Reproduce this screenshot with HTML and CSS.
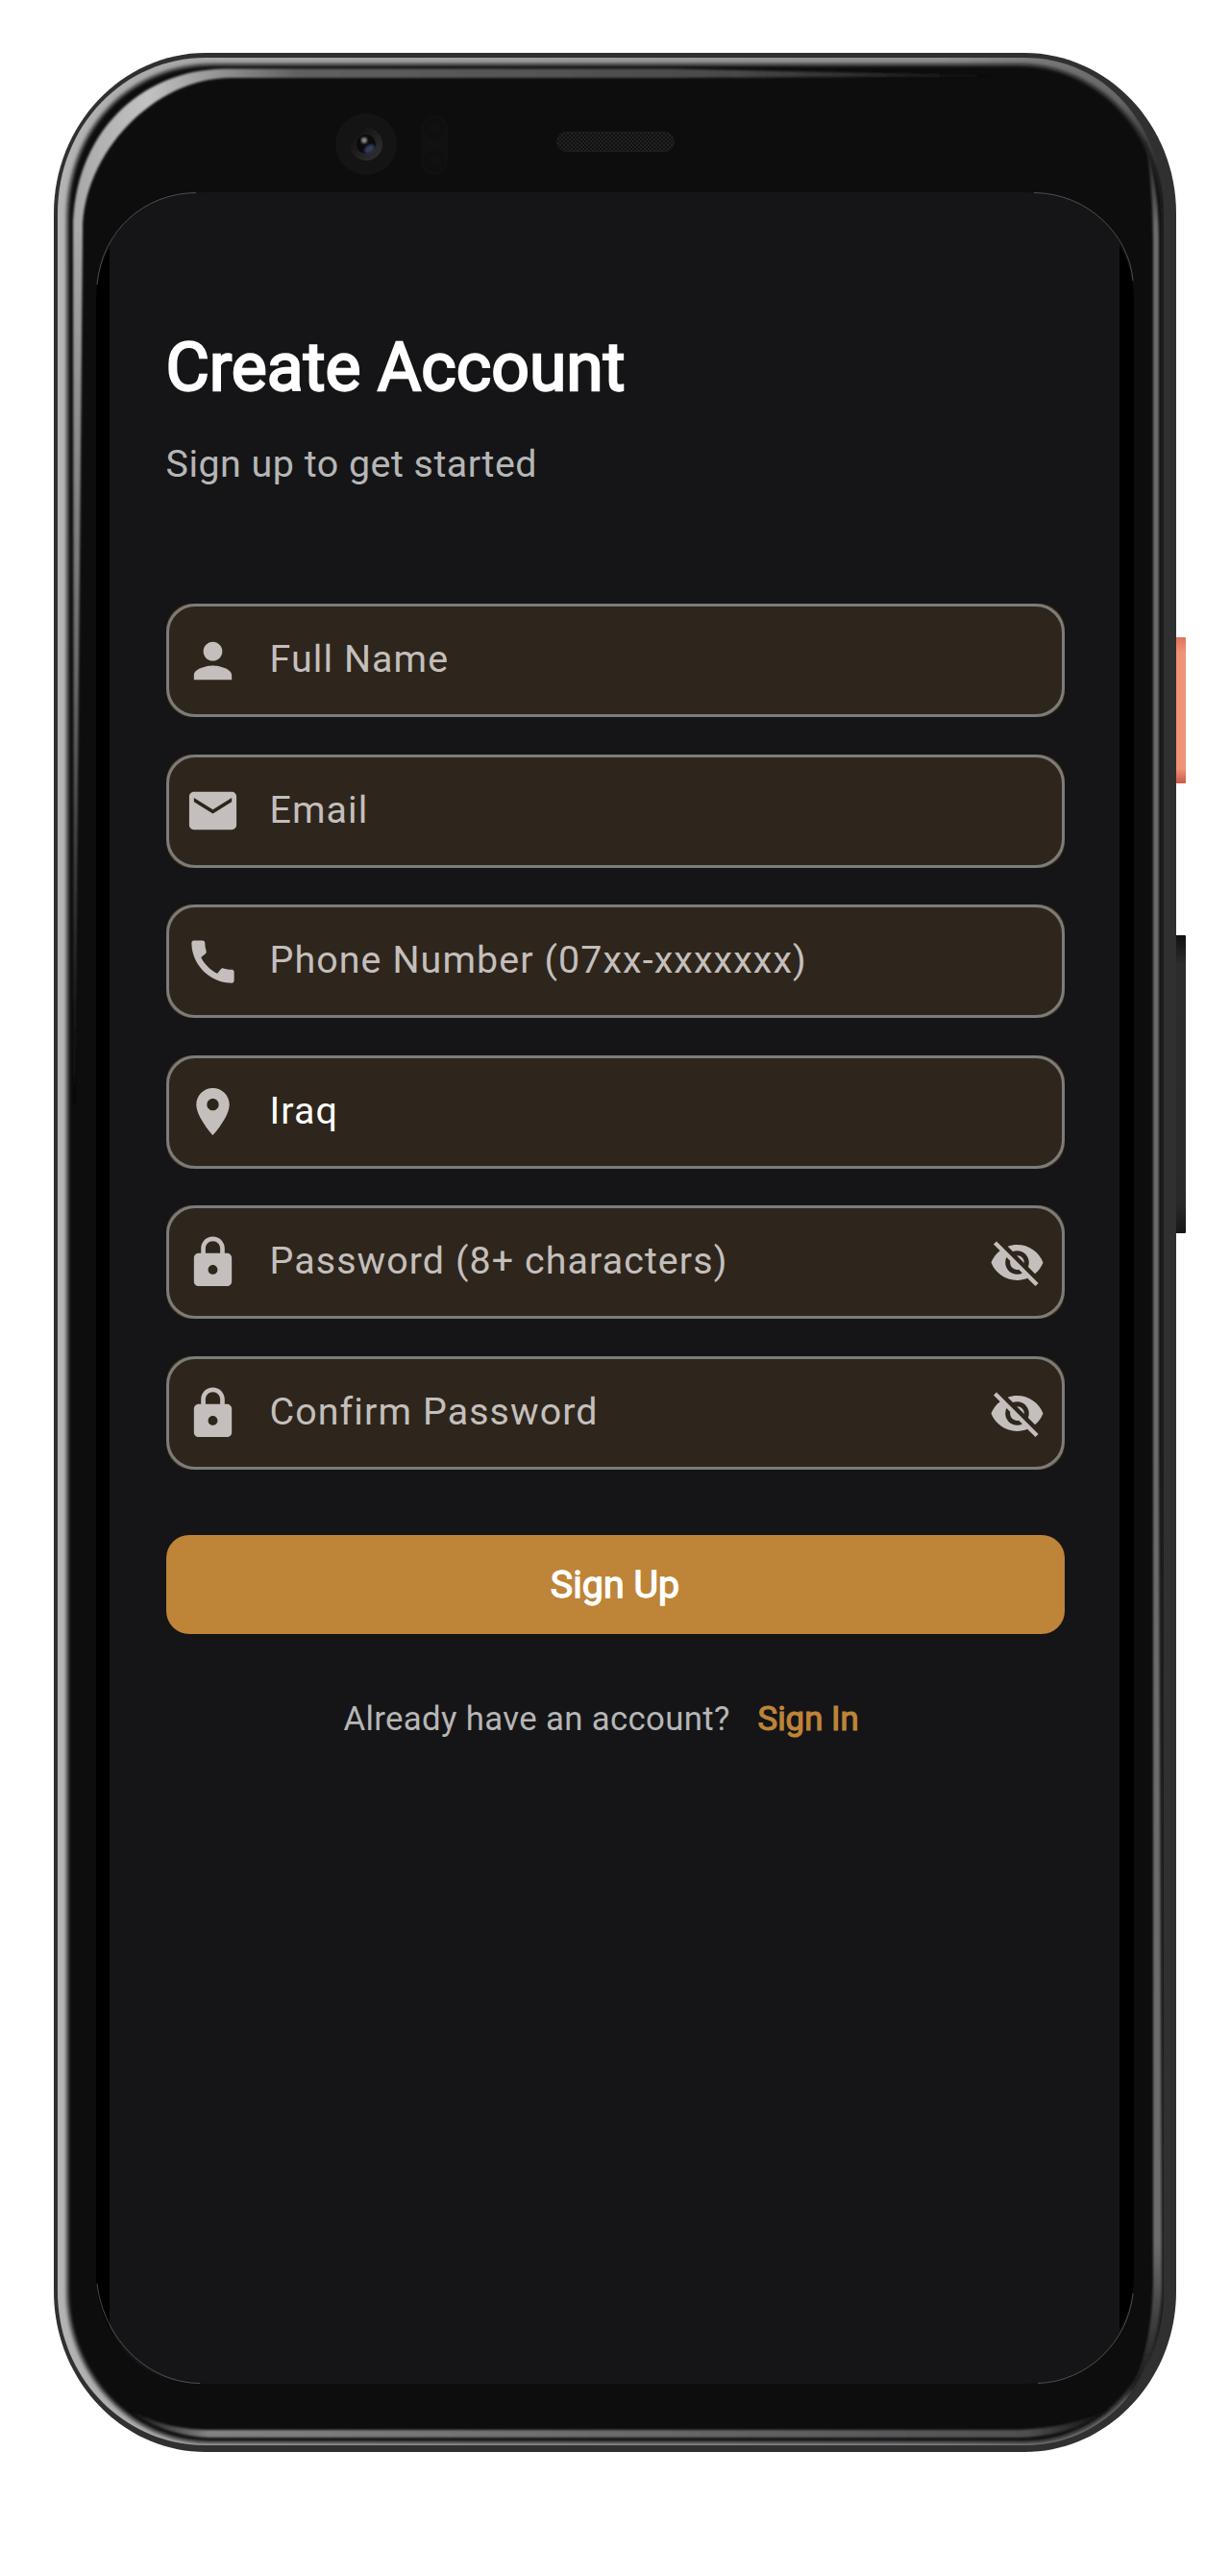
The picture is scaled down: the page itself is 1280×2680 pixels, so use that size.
FILE: index.html
```html
<!DOCTYPE html>
<html lang="en">
<head>
<meta charset="utf-8">
<title>Create Account</title>
<link rel="stylesheet" href="styles.css">
</head>
<body>
<div class="stage">
  <svg class="device" viewBox="0 0 1280 2680" aria-hidden="true">
    <defs>
      <linearGradient id="silver" x1="60" x2="1211" y1="0" y2="0" gradientUnits="userSpaceOnUse">
        <stop offset="0" stop-color="#b4b4b4"/><stop offset=".12" stop-color="#a6a6a8"/><stop offset=".8" stop-color="#8e8e90"/><stop offset=".96" stop-color="#666"/><stop offset="1" stop-color="#2c2c2c"/>
      </linearGradient>
      <linearGradient id="glareX" x1="76" x2="1045" y1="0" y2="0" gradientUnits="userSpaceOnUse">
        <stop offset="0" stop-color="#a8a8a8"/><stop offset=".08" stop-color="#c2c2c2"/><stop offset=".24" stop-color="#606060"/><stop offset=".7" stop-color="#4a4a4a"/><stop offset="1" stop-color="#101010"/>
      </linearGradient>
      <linearGradient id="glareY" x1="0" x2="0" y1="240" y2="1150" gradientUnits="userSpaceOnUse">
        <stop offset="0" stop-color="#a8a8a8"/><stop offset=".5" stop-color="#6c6c6c"/><stop offset="1" stop-color="#0d0d0f"/>
      </linearGradient>
      <linearGradient id="edgeY" x1="0" x2="0" y1="140" y2="2500" gradientUnits="userSpaceOnUse">
        <stop offset="0" stop-color="#111"/><stop offset=".04" stop-color="#6c6c6c"/><stop offset=".93" stop-color="#6c6c6e"/><stop offset="1" stop-color="#101012"/>
      </linearGradient>
      <linearGradient id="footX" x1="135" x2="1150" y1="0" y2="0" gradientUnits="userSpaceOnUse">
        <stop offset="0" stop-color="#0d0d0f"/><stop offset=".08" stop-color="#828284"/><stop offset=".5" stop-color="#6a6a6c"/><stop offset=".92" stop-color="#505052"/><stop offset="1" stop-color="#0d0d0f"/>
      </linearGradient>
      <linearGradient id="power" x1="0" x2="0" y1="0" y2="1">
        <stop offset="0" stop-color="#e0735c"/><stop offset=".1" stop-color="#f09278"/><stop offset=".9" stop-color="#f09278"/><stop offset="1" stop-color="#c85a48"/>
      </linearGradient>
      <linearGradient id="volume" x1="0" x2="0" y1="0" y2="1">
        <stop offset="0" stop-color="#111"/><stop offset=".1" stop-color="#2c2c2c"/><stop offset=".9" stop-color="#292929"/><stop offset="1" stop-color="#161616"/>
      </linearGradient>
      <linearGradient id="lens" x1="0" y1="0" x2="1" y2="1">
        <stop offset=".2" stop-color="#131313"/><stop offset="1" stop-color="#343438"/>
      </linearGradient>
      <pattern id="mesh" width="4" height="4" patternUnits="userSpaceOnUse">
        <rect width="4" height="4" fill="#101010"/><rect width="2" height="2" fill="#222"/><rect x="2" y="2" width="2" height="2" fill="#222"/>
      </pattern>
      <filter id="soft" x="-5%" y="-5%" width="110%" height="110%"><feGaussianBlur stdDeviation="2"/></filter>
      <filter id="fine" x="-5%" y="-5%" width="110%" height="110%"><feGaussianBlur stdDeviation=".8"/></filter>
      <clipPath id="bezel"><path d="M60 222C60 130 130 60 214 60H1066C1150 60 1211 130 1211 222V2384C1211 2475 1150 2544 1066 2544H214C130 2544 60 2475 60 2384Z"/></clipPath>
    </defs>
    <rect x="1220" y="663" width="14" height="152" rx="1" fill="url(#power)"/>
    <rect x="1220" y="973" width="14" height="310" rx="1" fill="url(#volume)"/>
    <path fill="#303030" d="M56 222C56 130 127 55 214 55H1066C1153 55 1224 130 1224 222V2384C1224 2476 1153 2551 1066 2551H214C127 2551 56 2476 56 2384Z"/>
    <g clip-path="url(#bezel)">
      <rect x="60" y="60" width="1151" height="2484" fill="url(#silver)"/>
      <path filter="url(#soft)" fill="#0d0d0f" d="M70 228C70 134 134 67 222 67H1060C1140 67 1210 134 1210 228V2384C1210 2472 1146 2541 1066 2541H218C130 2541 70 2464 70 2384Z"/>
    </g>
    <g filter="url(#fine)">
      <path fill="url(#glareX)" d="M76 240C76 140 145 72 235 71.500H700L1045 79L700 81H240C160 81 86 160 86 240Z"/>
      <path fill="url(#glareY)" d="M76 239.500H86L78 1150H77Z"/>
      <path fill="url(#edgeY)" d="M1192 145C1200 175 1206 205 1206 250V1500L1209 2380C1208 2425 1195 2470 1172 2495C1190 2465 1200 2420 1200 2370V250C1200 205 1196 175 1192 145Z"/>
      <path fill="url(#footX)" d="M132 2506C165 2523 190 2528 220 2528H1060C1095 2527 1125 2520 1155 2506C1130 2525 1100 2535 1060 2536H220C185 2535 155 2524 132 2506Z"/>
    </g>
    <rect x="100" y="200" width="1080" height="2280" rx="112"/>
    <circle cx="381" cy="150" r="32" fill="#141414"/>
    <circle cx="381" cy="150" r="17" fill="url(#lens)"/>
    <circle cx="381" cy="150" r="10" fill="#0b0b0d"/>
    <g filter="url(#fine)"><ellipse cx="384.500" cy="155" rx="6" ry="4" fill="#343b58" transform="rotate(-35 384.500 155)"/><circle cx="379" cy="146" r="3" fill="#8c8c8c"/></g>
    <rect x="438" y="120" width="28" height="62" rx="14" fill="#111112"/>
    <circle cx="452" cy="133.500" r="11" fill="#0f0f0f"/><circle cx="452" cy="168" r="11" fill="#0f0f0f"/>
    <circle cx="453" cy="132" r="5" fill="#111"/><circle cx="453" cy="166" r="5" fill="#111"/>
    <rect x="579.500" y="137.500" width="122" height="20" rx="10" fill="url(#mesh)" stroke="#1e1e1e"/>
    <path fill="#151517" d="M114 254C132 221 164 200 212 200H1068C1116 200 1148 221 1165 252V2427C1148 2459 1116 2480 1068 2480H212C164 2480 132 2459 114 2421Z"/>
    <g fill="none" stroke="#6a6a6c" stroke-width=".7">
      <path d="M101 296C106 240 150 201 204 200.500M1076 200.500C1132 201 1175 244 1179 292M101 2376C108 2434 154 2479 208 2479.500M1080 2479.500C1132 2478 1174 2436 1179 2386"/>
    </g>
    <symbol id="off" viewBox="0 0 24 24"><path d="M12 7c2.760 0 5 2.240 5 5 0 .65-.13 1.260-.36 1.830l2.920 2.920c1.510-1.260 2.700-2.890 3.430-4.750-1.730-4.390-6-7.500-11-7.500-1.400 0-2.740.25-3.980.7l2.160 2.160C10.740 7.130 11.350 7 12 7zM2 4.270l2.280 2.280.46.46C3.080 8.300 1.780 10.020 1 12c1.730 4.390 6 7.500 11 7.500 1.550 0 3.030-.3 4.380-.84l.42.42L19.730 22 21 20.730 3.270 3 2 4.270zM7.530 9.800l1.550 1.550c-.05.21-.08.43-.08.65 0 1.660 1.340 3 3 3 .22 0 .44-.03.65-.08l1.550 1.550c-.67.33-1.410.53-2.200.53-2.760 0-5-2.240-5-5 0-.79.2-1.530.53-2.200zm4.310-.78l3.150 3.150.02-.16c0-1.660-1.340-3-3-3l-.17.01z"/></symbol>
    <symbol id="lock" viewBox="0 0 24 24"><path d="M18 8h-1V6c0-2.760-2.240-5-5-5S7 3.240 7 6v2H6c-1.100 0-2 .9-2 2v10c0 1.100.9 2 2 2h12c1.100 0 2-.9 2-2V10c0-1.100-.9-2-2-2zm-6 9c-1.100 0-2-.9-2-2s.9-2 2-2 2 .9 2 2-.9 2-2 2zm3.100-9H8.900V6c0-1.710 1.390-3.100 3.100-3.100 1.710 0 3.100 1.390 3.100 3.100v2z"/></symbol>
  </svg>

  <main class="screen">
    <h1 class="title">Create Account</h1>
    <p class="subtitle">Sign up to get started</p>
    <form class="form">
      <div class="fill"><label class="field"><svg class="icon" viewBox="0 0 24 24"><path d="M12 12c2.210 0 4-1.790 4-4s-1.790-4-4-4-4 1.790-4 4 1.790 4 4 4zm0 2c-2.670 0-8 1.340-8 4v2h16v-2c0-2.660-5.330-4-8-4z"/></svg><span class="label">Full Name</span></label></div>
      <div class="fill"><label class="field"><svg class="icon" viewBox="0 0 24 24"><path d="M20 4H4c-1.100 0-1.990.9-1.990 2L2 18c0 1.100.9 2 2 2h16c1.100 0 2-.9 2-2V6c0-1.100-.9-2-2-2zm0 4.250l-8 5-8-5V6.500l8 5 8-5v1.750z"/></svg><span class="label">Email</span></label></div>
      <div class="fill"><label class="field"><svg class="icon" viewBox="0 0 24 24"><path d="M20.010 15.380c-1.230 0-2.420-.2-3.530-.56-.35-.12-.74-.03-1.010.24l-1.570 1.970c-2.830-1.350-5.480-3.900-6.890-6.830l1.950-1.660c.27-.28.35-.67.24-1.020-.37-1.110-.56-2.300-.56-3.530 0-.54-.45-.99-.99-.99H4.190C3.650 3 3 3.240 3 3.990 3 13.280 10.730 21 20.010 21c.71 0 .99-.63.99-1.180v-3.450c0-.54-.45-.99-.99-.99z"/></svg><span class="label">Phone Number (07xx-xxxxxxx)</span></label></div>
      <div class="fill"><label class="field"><svg class="icon" viewBox="0 0 24 24"><path d="M12 2C8.130 2 5 5.130 5 9c0 5.250 7 13 7 13s7-7.750 7-13c0-3.870-3.130-7-7-7zm0 9.500c-1.380 0-2.500-1.120-2.500-2.500s1.120-2.500 2.500-2.500 2.500 1.120 2.500 2.500-1.120 2.500-2.500 2.500z"/></svg><span class="label value">Iraq</span></label></div>
      <div class="fill"><label class="field"><svg class="icon"><use href="#lock"/></svg><span class="label">Password (8+ characters)</span><svg class="icon"><use href="#off"/></svg></label></div>
      <div class="fill"><label class="field"><svg class="icon"><use href="#lock"/></svg><span class="label">Confirm Password</span><svg class="icon"><use href="#off"/></svg></label></div>
      <button class="submit" type="button">Sign Up</button>
    </form>
    <p class="switch"><span>Already have an account?</span><a class="link">Sign In</a></p>
  </main>
</div>
</body>
</html>
```
FILE: styles.css
```css
* { box-sizing: border-box; }

body {
  margin: 0;
  background: #fff;
  font-family: Roboto, "Liberation Sans", sans-serif;
}

/* The device and its screen share one grid cell. */
.stage {
  display: grid;
  width: 1280px;
  height: 2680px;
}

.device,
.screen { grid-area: 1 / 1; }

.device {
  display: block;
  width: 1280px;
  height: 2680px;
}

.screen {
  display: flex;
  flex-direction: column;
  padding: 339px 172.500px 0;
}

.title {
  margin: 0;
  color: #fff;
  font-size: 69.700px;
  font-weight: 400;
  line-height: 86px;
  -webkit-text-stroke: 2.300px #fff;
}

.subtitle {
  margin: 34.500px 0 0;
  color: #b6b6b6;
  font-size: 39.400px;
  line-height: 46px;
  letter-spacing: .5px;
}

.form {
  display: flex;
  flex-direction: column;
  gap: 38.500px;
  margin-top: 122.500px;
}

.fill {
  height: 118.100px;
  border-radius: 27px;
  background: #49351d;
}

.field {
  display: flex;
  align-items: center;
  height: 100%;
  padding: 0 17px 0 16.500px;
  border: 3px solid #7c7c7b;
  border-radius: 30px;
  background: #2e261c;
}

.icon {
  flex: none;
  width: 59px;
  height: 59px;
  fill: #c4bfbc;
}

.label {
  flex: 1;
  margin: -2px 0 0 29.500px;
  color: #c4bfbc;
  font-size: 39.400px;
  line-height: 46px;
  letter-spacing: 1.080px;
  white-space: nowrap;
}

.value { color: #fff; }

.submit {
  height: 103px;
  margin: 29.500px 0 0;
  padding: 0;
  border: 0;
  border-radius: 24px;
  background: #be8438;
  color: #fff;
  font: 400 39.400px/46px Roboto, "Liberation Sans", sans-serif;
  -webkit-text-stroke: 1.300px #fff;
}

.switch {
  display: flex;
  gap: 28.800px;
  margin: 66.200px 0 0 185px;
  color: #b6b6b6;
  font-size: 34.800px;
  line-height: 44px;
  letter-spacing: .32px;
}

.link {
  color: #be8438;
  letter-spacing: 0;
  -webkit-text-stroke: 1.200px #be8438;
}
```
